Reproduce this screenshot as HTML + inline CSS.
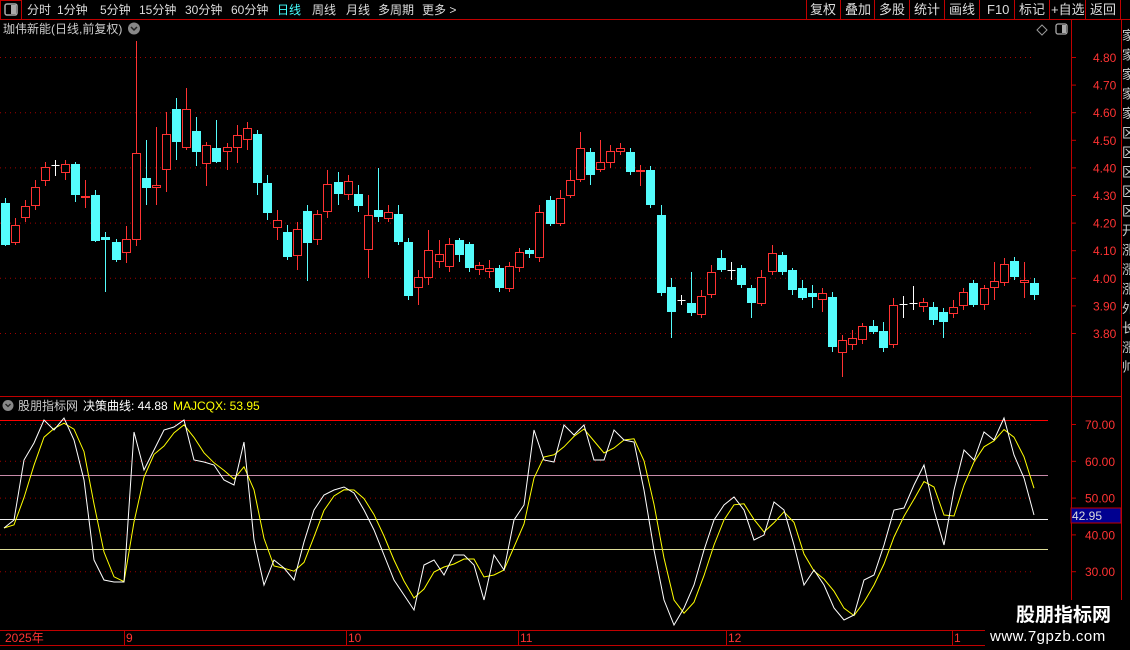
<!DOCTYPE html>
<html><head><meta charset="utf-8">
<style>
body{margin:0;background:#000;width:1130px;height:650px;overflow:hidden;font-family:"Liberation Sans","Noto Sans CJK SC",sans-serif;}
svg{position:absolute;left:0;top:0}
</style></head>
<body>
<svg id="s" width="1130" height="650" xmlns="http://www.w3.org/2000/svg" font-family="Liberation Sans, Noto Sans CJK SC, sans-serif">
<defs><clipPath id="rcc"><rect x="1122" y="20" width="8" height="610"/></clipPath></defs>
<rect width="1130" height="650" fill="#000"/>
<!-- toolbar -->
<line x1="0" y1="19.5" x2="1130" y2="19.5" stroke="#c00000"/>
<rect x="0.5" y="0.5" width="21" height="19" fill="none" stroke="#c00000"/>
<rect x="5" y="4" width="12" height="11" rx="2" fill="none" stroke="#aaa" stroke-width="1.5"/><rect x="11" y="5" width="5" height="9" fill="#aaa"/>
<g font-size="12" fill="#ddd">
<text x="27" y="14">分时</text><text x="57" y="14">1分钟</text><text x="100" y="14">5分钟</text><text x="139" y="14">15分钟</text><text x="185" y="14">30分钟</text><text x="231" y="14">60分钟</text>
<text x="277" y="14" fill="#4ff">日线</text><text x="312" y="14">周线</text><text x="346" y="14">月线</text><text x="378" y="14">多周期</text><text x="422" y="14">更多 &gt;</text>
</g>
<g stroke="#c00000"><line x1="806.5" y1="0" x2="806.5" y2="19"/><line x1="840.5" y1="0" x2="840.5" y2="19"/><line x1="874.5" y1="0" x2="874.5" y2="19"/><line x1="909.5" y1="0" x2="909.5" y2="19"/><line x1="944.5" y1="0" x2="944.5" y2="19"/><line x1="979.5" y1="0" x2="979.5" y2="19"/><line x1="1014.5" y1="0" x2="1014.5" y2="19"/><line x1="1049.5" y1="0" x2="1049.5" y2="19"/><line x1="1085.5" y1="0" x2="1085.5" y2="19"/><line x1="1120.5" y1="0" x2="1120.5" y2="19"/></g>
<g font-size="13" fill="#ddd">
<text x="810" y="14">复权</text><text x="845" y="14">叠加</text><text x="879" y="14">多股</text><text x="914" y="14">统计</text><text x="949" y="14">画线</text><text x="987" y="14">F10</text><text x="1019" y="14">标记</text><text x="1051" y="14">+自选</text><text x="1090" y="14">返回</text>
</g>
<!-- title row -->
<text x="3" y="33" font-size="12" fill="#ccc">珈伟新能(日线,前复权)</text>
<circle cx="134" cy="28.5" r="6" fill="#888"/><path d="M131 27l3 3 3-3" stroke="#222" stroke-width="1.5" fill="none"/>
<path d="M1042 25l5 5-5 5-5-5z" fill="none" stroke="#999"/>
<rect x="1056" y="24" width="11" height="10" rx="2" fill="none" stroke="#aaa" stroke-width="1.3"/><rect x="1062" y="25" width="4" height="8" fill="#aaa"/>
<!-- frames -->
<line x1="1071.5" y1="20" x2="1071.5" y2="646" stroke="#c00000"/>
<line x1="1121.5" y1="20" x2="1121.5" y2="646" stroke="#c00000"/>
<line x1="0" y1="396.5" x2="1121" y2="396.5" stroke="#c00000"/>
<line x1="0" y1="630.5" x2="1130" y2="630.5" stroke="#c00000"/>
<line x1="0" y1="645.5" x2="1130" y2="645.5" stroke="#c00000"/>
<g id="grid" stroke="#a00000" stroke-dasharray="1,4"></g>
<g id="ax" font-size="12" fill="#f33"></g>
<g id="cd"></g>
<!-- indicator -->
<circle cx="8" cy="405.5" r="5.5" fill="#888"/><path d="M5.5 404l2.5 2.5 2.5-2.5" stroke="#222" stroke-width="1.3" fill="none"/>
<text x="18" y="410" font-size="12" fill="#ccc">股朋指标网</text>
<text x="83" y="410" font-size="12" fill="#fff">决策曲线: 44.88</text>
<text x="173" y="410" font-size="12" fill="#ff0">MAJCQX: 53.95</text>
<line x1="0" y1="420.5" x2="1048" y2="420.5" stroke="#f00"/>
<line x1="0" y1="475.5" x2="1048" y2="475.5" stroke="#d9b" stroke-opacity=".9"/>
<line x1="0" y1="519.5" x2="1048" y2="519.5" stroke="#eee"/>
<line x1="0" y1="549.5" x2="1048" y2="549.5" stroke="#dd9"/>
<polyline id="yl" fill="none" stroke="#ff0" stroke-width="1"/>
<polyline id="wl" fill="none" stroke="#fff" stroke-width="1"/>
<rect x="1071" y="508" width="50" height="15" fill="#000090" stroke="#c00000"/>
<text x="1072" y="520" font-size="12" fill="#ddd">42.95</text>
<!-- date axis -->
<g font-size="12" fill="#f33"><text x="5" y="642">2025年</text><text x="126" y="642">9</text><text x="348" y="642">10</text><text x="520" y="642">11</text><text x="728" y="642">12</text><text x="954" y="642">1</text></g>
<g stroke="#c00000"><line x1="124.5" y1="630" x2="124.5" y2="646"/><line x1="346.5" y1="630" x2="346.5" y2="646"/><line x1="518.5" y1="630" x2="518.5" y2="646"/><line x1="726.5" y1="630" x2="726.5" y2="646"/><line x1="952.5" y1="630" x2="952.5" y2="646"/></g>
<!-- right column partial -->
<g font-size="13" fill="#ccc" id="rc" clip-path="url(#rcc)"></g>
<!-- watermark -->
<rect x="985" y="600" width="145" height="50" fill="#000"/>
<text x="1016" y="621" font-size="19" font-weight="bold" fill="#fff">股朋指标网</text>
<text x="990" y="641" font-size="15" fill="#fff" letter-spacing="0.5">www.7gpzb.com</text>
</svg>
<script>
var NS="http://www.w3.org/2000/svg";
function el(p,t,a,txt){var e=document.createElementNS(NS,t);for(var k in a)e.setAttribute(k,a[k]);if(txt)e.textContent=txt;document.getElementById(p).appendChild(e);return e;}
var labs=["4.80","4.70","4.60","4.50","4.40","4.30","4.20","4.10","4.00","3.90","3.80"];
for(var i=0;i<labs.length;i++){var y=57+i*27.6;
 if(i%2==0)el("grid","line",{x1:0,x2:1035,y1:y+.5,y2:y+.5});
 el("ax","line",{x1:1071,x2:1076,y1:y+.5,y2:y+.5,stroke:"#c00000"});
 el("ax","text",{x:1093,y:y+5},labs[i]);}
var il=["70.00","60.00","50.00","40.00","30.00"];
for(var i=0;i<5;i++){var y=424+i*36.8;
 el("grid","line",{x1:0,x2:1035,y1:y+.5,y2:y+.5});
 el("ax","line",{x1:1071,x2:1076,y1:y+.5,y2:y+.5,stroke:"#c00000"});
 el("ax","text",{x:1085,y:y+5},il[i]);}
var rcs=["家","家","家","家","家","区","区","区","区","区","开","涨","涨","涨","外","长","涨","帅"];
for(var i=0;i<rcs.length;i++)el("rc","text",{x:1122,y:40+i*19.5},rcs[i]);
var C=[
["c",203,245,198,246],["r",225,243,218,245],["r",206,218,200,222],["r",187,206,180,210],["r",167,181,162,186],["w",165,165,160,176],["r",164,173,160,180],["c",164,195,162,202],
["r",196,198,180,208],["c",195,241,190,242],["c",237,240,232,292],["c",242,260,239,262],["r",239,253,226,263],["r",153,240,41,246],["c",178,188,140,205],["r",185,188,127,205],
["r",134,170,112,192],["c",109,142,98,160],["r",109,148,88,150],["c",131,152,117,166],["r",145,164,142,186],["c",148,162,120,163],["r",147,152,143,170],["r",135,148,125,163],
["r",128,140,122,150],
["c",134,183,130,195],["c",183,213,175,220],["r",220,228,210,240],["c",232,257,225,260],["r",229,256,222,270],["c",211,243,205,281],["r",214,240,210,245],["r",184,212,170,218],
["c",182,194,172,205],["r",181,195,175,200],["c",194,206,185,212],["r",215,250,195,278],["c",210,217,168,222],["r",212,219,205,222],["c",214,242,205,245],["c",242,296,238,300],
["r",277,288,270,305],["r",250,278,230,285],["r",254,262,240,268],["r",244,267,238,272],["c",240,255,238,262],["c",244,268,242,272],["r",265,270,262,275],["r",268,272,260,278],
["c",268,288,265,292],["r",266,289,262,292],["r",252,268,248,272],["c",250,254,248,258],["r",212,258,205,262],["c",200,224,196,226],["r",198,224,190,226],["r",180,196,170,198],
["r",148,180,132,182],["c",152,175,148,185],["r",162,170,140,172],["r",151,163,145,168],["r",148,152,143,155],["c",152,172,148,175],["r",170,172,165,186],["c",170,205,166,208],
["c",215,293,205,296],["c",287,312,278,338],["w",300,300,295,305],["c",303,313,272,316],["r",296,315,290,318],["r",272,295,265,298],["c",258,270,250,272],["w",270,270,262,280],
["c",268,285,265,288],["c",288,303,285,318],["r",277,304,270,306],["r",253,272,245,275],["c",255,272,252,275],["c",270,290,268,295],["c",288,298,280,300],["c",293,297,285,308],
["r",293,300,288,312],["c",297,347,292,352],["r",340,353,335,377],["r",338,345,330,350],["r",326,340,323,344],["c",326,332,320,334],["c",331,348,322,352],["r",305,345,298,348],
["w",304,304,296,318],["w",303,303,286,310],["r",302,307,298,312],["c",307,320,302,325],["c",312,322,308,338],["r",307,314,300,318],["r",292,306,288,310],["c",283,305,280,307],
["r",288,305,285,310],["r",281,288,262,300],["r",264,283,258,286],["c",261,277,257,280],["r",280,283,262,298],["c",283,295,278,300]];
var cols={c:"#54fcfc",r:"#ff3232",w:"#fff"};
var sp=(1034-4.5)/(C.length-1);
for(var i=0;i<C.length;i++){var d=C[i],x=4.5+i*sp,col=cols[d[0]];
 var cx=Math.round(x)+.5;
 el("cd","line",{x1:cx,x2:cx,y1:d[3],y2:d[4],stroke:col});
 var h=Math.max(1,d[2]-d[1]);
 if(d[0]=="c")el("cd","rect",{x:cx-4.5,y:d[1],width:9,height:h,fill:col});
 else if(d[0]=="r")el("cd","rect",{x:cx-4,y:d[1]+.5,width:8,height:Math.max(1,h-1),fill:"#000",stroke:col});
 else el("cd","line",{x1:cx-4,x2:cx+4,y1:d[1]+.5,y2:d[1]+.5,stroke:col});}
var W=[528,520,460,443,420,430,418,440,480,560,580,582,582,432,470,450,430,427,420,460,462,465,480,485,442,540,585,560,568,580,542,510,495,490,487,493,510,530,555,580,595,610,565,560,575,555,555,565,600,555,570,520,505,430,460,462,425,435,425,460,460,430,440,442,490,550,600,625,608,585,550,520,505,497,510,540,535,502,510,545,585,570,585,608,620,615,580,575,545,510,508,485,465,510,545,490,450,460,432,440,418,455,478,515];
var wp=[],yp=[];
for(var i=0;i<W.length;i++){var x=4+i*10;wp.push(x+","+W[i]);
 var a=W[Math.max(0,i-2)],b=W[Math.max(0,i-1)],c=W[i];yp.push(x+","+((a+b*2+c*2)/5).toFixed(1));}
document.getElementById("wl").setAttribute("points",wp.join(" "));
document.getElementById("yl").setAttribute("points",yp.join(" "));
</script>
</body></html>
